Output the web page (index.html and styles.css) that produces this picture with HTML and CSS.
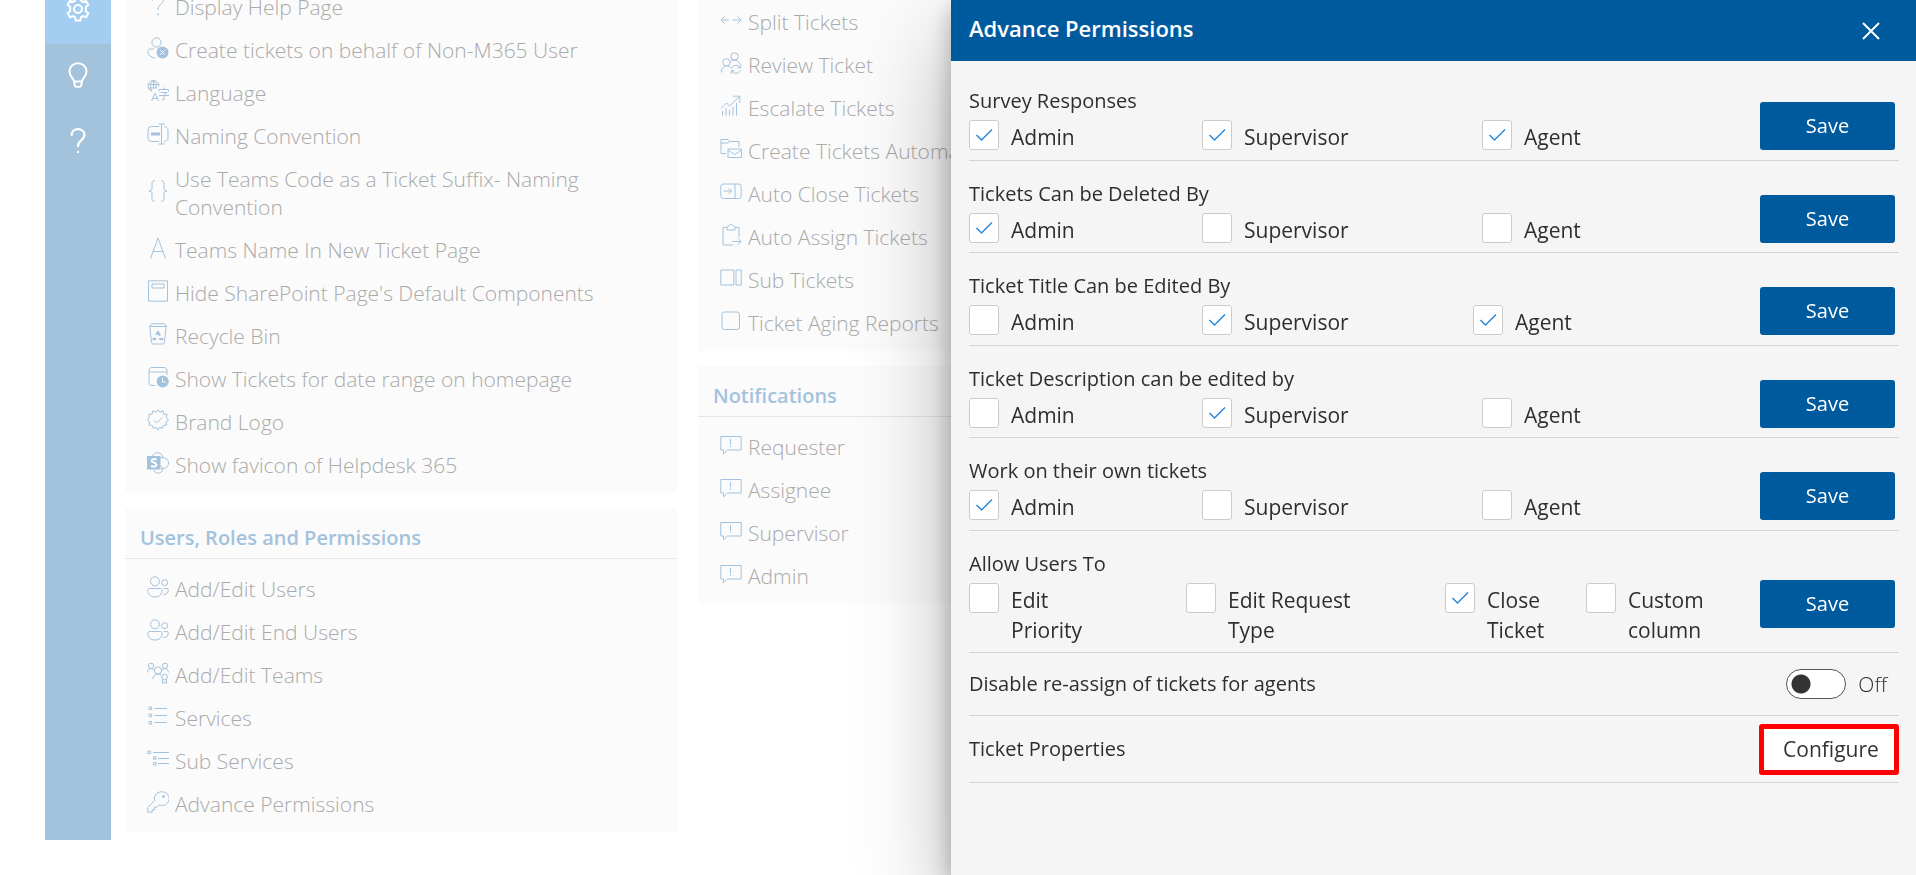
FILE: index.html
```html
<!DOCTYPE html>
<html lang="en">
<head>
<meta charset="utf-8">
<title>Helpdesk 365 Settings</title>
<link rel="stylesheet" href="styles.css">
</head>
<body>
<svg class="defs" aria-hidden="true">
  <symbol id="question" viewBox="0 0 22 22"><path d="M5.500 6.500C5.500 3 8 1 11 1s5.500 2 5.500 5c0 4-5.500 4.500-5.500 9v1"/><circle class="solid" cx="11" cy="20.300" r="1"/></symbol>
  <symbol id="user-x" viewBox="0 0 22 22"><circle cx="9.500" cy="5.500" r="4.600"/><path d="M7 12H3.500C1.800 12 .8 13 .8 14.500c0 3.700 3.200 6 7.700 6.500"/><circle class="solid" cx="15.500" cy="15.500" r="6"/><path class="knock" d="M13.300 13.300l4.400 4.400M17.700 13.300l-4.400 4.400"/></symbol>
  <symbol id="rename" viewBox="0 0 22 22"><path d="M12 3.500H4.500a3.500 3.500 0 0 0-3.500 3.500v8a3.500 3.500 0 0 0 3.500 3.500H12M17 3.500c2.500 0 4 1.500 4 3.500v8c0 2-1.500 3.500-4 3.500M14.500 1v20M11.500 1h6M11.500 21h6"/><path class="bold" d="M4 11h9"/></symbol>
  <symbol id="braces" viewBox="0 0 22 22"><path d="M8 .8C5.500.8 5 1.500 5 4v4c0 2-.8 3-3 3 2.200 0 3 1 3 3v4c0 2.500.5 3.200 3 3.200M14 .8c2.500 0 3 .7 3 3.200v4c0 2 .8 3 3 3-2.200 0-3 1-3 3v4c0 2.500-.5 3.200-3 3.200"/></symbol>
  <symbol id="font" viewBox="0 0 22 22"><path d="M3.500 21.500L11 1l7.500 20.500M6 14.500h10"/></symbol>
  <symbol id="page" viewBox="0 0 22 22"><path d="M1.500.8h19v20.400h-19zM5 4h12v4H5z"/></symbol>
  <symbol id="bin" viewBox="0 0 22 22"><path d="M2.500 3.500L4.500.8h13l2 2.700zM2.800 3.500L4.500 19c.2 1.300.8 2 2 2h9c1.200 0 1.800-.7 2-2l1.700-15.500"/><path class="dashed" d="M11 9.200l4.200 6.800H6.800z"/></symbol>
  <symbol id="calendar-clock" viewBox="0 0 22 22"><path d="M20 9V4.500C20 2.500 18.500 1.500 17 1.500H5C3 1.500 2 3 2 4.500v12C2 18.500 3 19.500 5 19.500h3M2 6h18"/><circle class="solid" cx="15.700" cy="15.500" r="6"/><path class="knock" d="M15.500 12v4h3"/></symbol>
  <symbol id="badge" viewBox="0 0 22 22"><path d="M11 .8l2 2.400 3-1.300.8 3.200 3.200.2-.5 3.200 2 2.500-2.700 1.900.8 3.100-3.200.4-1.100 3-2.900-1.200L11 21.200l-1.800-3-2.900 1.200-1.100-3-3.200-.4.800-3.100L.3 11l2-2.500L1.800 5.300 5 5.100l.8-3.200 3.200 1.300z"/><path d="M7 11.500l2.700 2.500 5.300-5.300"/></symbol>
  <symbol id="people" viewBox="0 0 22 22"><circle cx="8" cy="5.300" r="4.500"/><circle cx="17.700" cy="6.700" r="3"/><path d="M2.500 12.500h11c1 0 1.600.6 1.600 1.600 0 4-2.500 6.900-7.100 6.900S.8 18 .8 14.100c0-1 .7-1.600 1.700-1.600zM16.500 12.500H20c.8 0 1.300.5 1.300 1.300 0 3.200-1.800 4.800-5 4.800"/></symbol>
  <symbol id="teams" viewBox="0 0 22 22"><circle cx="4" cy="3.800" r="2.700"/><circle cx="18" cy="3.800" r="2.700"/><circle cx="11" cy="8.500" r="3.600"/><path d="M.5 10.500C.8 8 2 6.500 4 6.500c1.500 0 2.700.8 3.300 2M21.500 10.500C21.200 8 20 6.500 18 6.500c-1.500 0-2.700.8-3.300 2M5.800 17c.4-3 2.200-5 5.200-5 1.500 0 2.500.4 3.300 1.200"/><circle cx="17.500" cy="15" r="2.800"/><path d="M15.500 17.500v4l2-1.500 2 1.500v-4"/></symbol>
  <symbol id="list" viewBox="0 0 22 22"><path d="M2 2h2.500v2.500H2zM2 9.200h2.500v2.500H2zM2 16.500h2.500V19H2zM7.500 3.500H20M7.500 10.500H20M7.500 17.500H20"/></symbol>
  <symbol id="sublist" viewBox="0 0 22 22"><path d="M.8 3h2.700v2.500H.8zM6.500 8.800H9v2.500H6.500zM6.500 14.500H9V17H6.500zM6 4.500h16M11 10.500h11M11 15.500h11"/></symbol>
  <symbol id="key" viewBox="0 0 22 22"><path d="M14.300.8a6.900 6.900 0 0 0-6.700 8.800L.8 16.400v4.800h4.400v-2.400h2.400v-2.600H10l2.200-2.400a6.900 6.900 0 1 0 2.100-13z"/><circle class="solid" cx="16.500" cy="5.500" r="1.400"/></symbol>
  <symbol id="split" viewBox="0 0 22 22"><path d="M1 11h8M4.500 7.500L1 11l3.500 3.500M12.500 11H21M17.500 7.500L21 11l-3.500 3.500"/></symbol>
  <symbol id="review" viewBox="0 0 22 22"><circle cx="14.500" cy="4.500" r="3.700"/><circle cx="6.500" cy="10.300" r="3.700"/><path d="M1 20.500C1.500 16.500 3.500 14 6.500 14c1.700 0 3 .7 4 2M10.500 9.800c1-1 2.300-1.600 4-1.600 2.700 0 4.800 1.500 5.800 4.300M11.500 17c.5-2.500 2.200-3.700 4.500-3.700 1.800 0 3 .8 4 2.200M20.800 12.500v3.200h-3.200M20.500 18c-.5 2-2.200 3.300-4.500 3.300-1.800 0-3-.8-4-2.200M11.300 22v-3.200h3.200"/></symbol>
  <symbol id="escalate" viewBox="0 0 22 22"><path d="M1 13.500L6.500 8l3 3L19.500 1.500M13 1.200h6.800V8M2.500 16v4.500M6 13v7.500M9.500 15v5.500M13 12v8.500M16.500 8v12.500"/></symbol>
  <symbol id="folder-mail" viewBox="0 0 22 22"><path d="M6 15.500H1V1.500h7l1.500 2h9.500V9M1 5h7l1.500-1.500M8 11h13.500v8.500H8zM8 12l6.700 4.500L21.500 12"/></symbol>
  <symbol id="panel-close" viewBox="0 0 22 22"><rect x=".8" y="3" width="20.400" height="14.500" rx="2.500"/><path d="M15 3v14.500M3.500 10h8M8.500 7l3 3-3 3"/></symbol>
  <symbol id="clipboard" viewBox="0 0 22 22"><path d="M13 21H3V3.500h4c0-1.500.8-1.500 1.800-1.500.2-.8 1-1.500 2.200-1.500S13 1.200 13.200 2c1 0 1.800 0 1.800 1.500h4V13M7 3.500V6h8V3.500M12 17.500h9M17.500 14l3.500 3.500-3.500 3.500"/></symbol>
  <symbol id="columns" viewBox="0 0 22 22"><path d="M.8 3h13v15H.8zM16 3h5.200v15H16z"/></symbol>
  <symbol id="square" viewBox="0 0 22 22"><rect x="2" y="2" width="17.500" height="17.500" rx="2.500"/></symbol>
  <symbol id="feedback" viewBox="0 0 22 22"><path d="M.8 2.500h20.400v13.500H7.500L3.500 19.800V16H.8zM10.500 5v5.500M10.500 11.500V13"/></symbol>
  <symbol id="gear" viewBox="0 0 26 26"><path d="M10.700 1.500h4.600l.6 3.200 2 1.200 3.100-1.100 2.300 4-2.500 2.100v4.200l2.500 2.100-2.300 4-3.100-1.100-2 1.200-.6 3.200h-4.600l-.6-3.200-2-1.200L5 21.200l-2.300-4 2.500-2.100v-4.200L2.700 8.800l2.300-4 3.100 1.100 2-1.200z"/><circle cx="13" cy="13" r="4"/></symbol>
  <symbol id="bulb" viewBox="0 0 26 26"><path d="M9 19.500c-.3-3-4.500-5-4.500-10A8.300 8.300 0 0 1 13 1.200a8.300 8.300 0 0 1 8.500 8.300c0 5-4.200 7-4.500 10zM9 19.500l.8 4c.1.800.7 1.300 1.500 1.300h3.400c.8 0 1.400-.5 1.500-1.300l.8-4"/></symbol>
</svg>

<div class="workspace">
  <nav class="rail" aria-label="Main">
    <a class="rail-item active" href="#settings" aria-label="Settings"><svg><use href="#gear"/></svg></a>
    <a class="rail-item" href="#ideas" aria-label="Ideas"><svg><use href="#bulb"/></svg></a>
    <a class="rail-item" href="#help" aria-label="Help"><svg><use href="#question"/></svg></a>
  </nav>
  <main class="columns">
    <div class="column">
      <section class="card continued">
        <ul class="links">
          <li><a href="#"><svg><use href="#question"/></svg>Display Help Page</a></li>
          <li><a href="#"><svg><use href="#user-x"/></svg>Create tickets on behalf of Non-M365 User</a></li>
          <li><a href="#"><svg viewBox="0 0 22 22" aria-hidden="true"><path d="M4.500 11A5.500 5.500 0 1 1 12 6.500M.8 4.500h11M.8 8h9M6.500.5C3 3 3 8 5 11M6.500.5v7.500M6.500.5C9 2.500 9.500 5 9 8M12 11.500V9.500h9.500v2M16.800 7.500v2M13.500 12.500h6.500l-3 2.500v4.500h-2M12 15.500h10M4.500 21L8 13l3.500 8M5.500 18.500h5"/></svg>Language</a></li>
          <li><a href="#"><svg><use href="#rename"/></svg>Naming Convention</a></li>
          <li><a href="#"><svg><use href="#braces"/></svg>Use Teams Code as a Ticket Suffix- Naming Convention</a></li>
          <li><a href="#"><svg><use href="#font"/></svg>Teams Name In New Ticket Page</a></li>
          <li><a href="#"><svg><use href="#page"/></svg>Hide SharePoint Page's Default Components</a></li>
          <li><a href="#"><svg><use href="#bin"/></svg>Recycle Bin</a></li>
          <li><a href="#"><svg><use href="#calendar-clock"/></svg>Show Tickets for date range on homepage</a></li>
          <li><a href="#"><svg><use href="#badge"/></svg>Brand Logo</a></li>
          <li><a href="#"><svg viewBox="0 0 22 22" aria-hidden="true"><path d="M5.500 4C6.500 2 8 .8 10.500.8c3 0 5.500 2.200 5.500 5.200M13 6c5-1.500 8.500 1.500 8.500 5s-3 6-7 5.500M7 17.500c0 2 1.500 3.700 4 3.700s4.500-1.700 4.500-4-1.500-3.700-3-4"/><path class="solid" d="M0 4h13.500v13.500H0z"/><path class="knock heavy" d="M9.500 7.800C7.500 6.500 4.500 7 4.500 8.800c0 2.200 5 1.500 5 4 0 2-3.300 2.300-5.300 1"/></svg>Show favicon of Helpdesk 365</a></li>
        </ul>
      </section>
      <section class="card">
        <h2>Users, Roles and Permissions</h2>
        <ul class="links">
          <li><a href="#"><svg><use href="#people"/></svg>Add/Edit Users</a></li>
          <li><a href="#"><svg><use href="#people"/></svg>Add/Edit End Users</a></li>
          <li><a href="#"><svg><use href="#teams"/></svg>Add/Edit Teams</a></li>
          <li><a href="#"><svg><use href="#list"/></svg>Services</a></li>
          <li><a href="#"><svg><use href="#sublist"/></svg>Sub Services</a></li>
          <li><a href="#"><svg><use href="#key"/></svg>Advance Permissions</a></li>
        </ul>
      </section>
    </div>
    <div class="column">
      <section class="card">
        <ul class="links">
          <li><a href="#"><svg><use href="#split"/></svg>Split Tickets</a></li>
          <li><a href="#"><svg><use href="#review"/></svg>Review Ticket</a></li>
          <li><a href="#"><svg><use href="#escalate"/></svg>Escalate Tickets</a></li>
          <li><a href="#"><svg><use href="#folder-mail"/></svg>Create Tickets Automatically</a></li>
          <li><a href="#"><svg><use href="#panel-close"/></svg>Auto Close Tickets</a></li>
          <li><a href="#"><svg><use href="#clipboard"/></svg>Auto Assign Tickets</a></li>
          <li><a href="#"><svg><use href="#columns"/></svg>Sub Tickets</a></li>
          <li><a href="#"><svg><use href="#square"/></svg>Ticket Aging Reports</a></li>
        </ul>
      </section>
      <section class="card">
        <h2>Notifications</h2>
        <ul class="links">
          <li><a href="#"><svg><use href="#feedback"/></svg>Requester</a></li>
          <li><a href="#"><svg><use href="#feedback"/></svg>Assignee</a></li>
          <li><a href="#"><svg><use href="#feedback"/></svg>Supervisor</a></li>
          <li><a href="#"><svg><use href="#feedback"/></svg>Admin</a></li>
        </ul>
      </section>
    </div>
  </main>
</div>

<aside class="panel" aria-label="Advance Permissions">
  <header class="panel-head">
    <h1>Advance Permissions</h1>
    <button class="close" type="button" aria-label="Close"><svg viewBox="0 0 18 18"><path d="M1 1l16 16M17 1L1 17"/></svg></button>
  </header>
  <div class="panel-body">
    <section class="row">
      <div class="group">
        <h3>Survey Responses</h3>
        <div class="options roles">
          <label><input type="checkbox" checked><span>Admin</span></label>
          <label><input type="checkbox" checked><span>Supervisor</span></label>
          <label><input type="checkbox" checked><span>Agent</span></label>
        </div>
      </div>
      <button class="save" type="button">Save</button>
    </section>
    <section class="row">
      <div class="group">
        <h3>Tickets Can be Deleted By</h3>
        <div class="options roles">
          <label><input type="checkbox" checked><span>Admin</span></label>
          <label><input type="checkbox"><span>Supervisor</span></label>
          <label><input type="checkbox"><span>Agent</span></label>
        </div>
      </div>
      <button class="save" type="button">Save</button>
    </section>
    <section class="row">
      <div class="group">
        <h3>Ticket Title Can be Edited By</h3>
        <div class="options title-roles">
          <label><input type="checkbox"><span>Admin</span></label>
          <label><input type="checkbox" checked><span>Supervisor</span></label>
          <label><input type="checkbox" checked><span>Agent</span></label>
        </div>
      </div>
      <button class="save" type="button">Save</button>
    </section>
    <section class="row">
      <div class="group">
        <h3>Ticket Description can be edited by</h3>
        <div class="options roles">
          <label><input type="checkbox"><span>Admin</span></label>
          <label><input type="checkbox" checked><span>Supervisor</span></label>
          <label><input type="checkbox"><span>Agent</span></label>
        </div>
      </div>
      <button class="save" type="button">Save</button>
    </section>
    <section class="row">
      <div class="group">
        <h3>Work on their own tickets</h3>
        <div class="options roles">
          <label><input type="checkbox" checked><span>Admin</span></label>
          <label><input type="checkbox"><span>Supervisor</span></label>
          <label><input type="checkbox"><span>Agent</span></label>
        </div>
      </div>
      <button class="save" type="button">Save</button>
    </section>
    <section class="row">
      <div class="group">
        <h3>Allow Users To</h3>
        <div class="options actions">
          <label><input type="checkbox"><span>Edit<br>Priority</span></label>
          <label><input type="checkbox"><span>Edit Request<br>Type</span></label>
          <label><input type="checkbox" checked><span>Close<br>Ticket</span></label>
          <label><input type="checkbox"><span>Custom<br>column</span></label>
        </div>
      </div>
      <button class="save" type="button">Save</button>
    </section>
    <section class="line">
      <label for="reassign">Disable re-assign of tickets for agents</label>
      <div class="toggle"><input id="reassign" type="checkbox" role="switch"><span>Off</span></div>
    </section>
    <section class="line properties">
      <h3>Ticket Properties</h3>
      <button class="configure" type="button">Configure</button>
    </section>
  </div>
</aside>
</body>
</html>
```

FILE: styles.css
```css
* { box-sizing: border-box; }
body {
  margin: 0;
  height: 100vh;
  overflow: hidden;
  background: #fff;
  color: #2e2e2e;
  font: 400 20px/30px "Open Sans", "Noto Sans", sans-serif;
}
h1, h2, h3, ul { margin: 0; padding: 0; font: inherit; list-style: none; }
a { color: inherit; text-decoration: none; }
button, input { font: inherit; margin: 0; }
svg { display: block; flex: none; fill: none; stroke: currentColor; }
.defs { position: absolute; width: 0; height: 0; }
.solid { fill: currentColor; stroke: none; }
.knock { stroke: #fff; }
.heavy { stroke-width: 2; }
.bold { stroke-width: 3; }
.dashed { stroke-width: 2; stroke-dasharray: 4 3; }

.workspace { display: flex; align-items: stretch; gap: 14px; padding: 0 93px 0 45px; margin-top: -7px; }
.rail { width: 66px; margin: -15px 0 -8px; background: #a3c2dc; color: #fff; flex: none; }
.rail-item { display: flex; align-items: center; justify-content: center; height: 66px; padding-bottom: 4px; }
.rail-item.active { background: #a3cef1; border-radius: 0 0 3px 3px; }
.rail-item svg { width: 26px; height: 26px; stroke-width: 2; }

.columns { flex: 1; display: grid; grid-template-columns: repeat(3, minmax(0, 1fr)); gap: 21px; align-items: start; }
.column { display: grid; gap: 15px; }
.card { background: #fbfbfb; color: #aaa; font-size: 21px; font-weight: 300; }
.card h2 { padding: 15px 15px 5px; border-bottom: 1px solid #e6e6e6; color: #a3c2dd; font-size: 20px; font-weight: 600; }
.links { display: grid; gap: 15px; padding: 15px 22px 14px; line-height: 28px; }
h2 + .links { padding-top: 16px; }
.continued .links { padding-top: 0; }
.links a { display: flex; align-items: center; gap: 6px; }
.links svg { width: 22px; height: 22px; margin-bottom: 4px; color: #a3c2dd; stroke-width: 1; }

.panel {
  position: fixed;
  top: 0;
  right: 0;
  bottom: 0;
  width: calc(50vw + 7px);
  background: #f5f5f5;
  box-shadow: 0 38px 86px rgba(0, 0, 0, .3), 0 7px 22px rgba(0, 0, 0, .26);
}
.panel-head { display: flex; align-items: center; justify-content: space-between; height: 61px; padding: 0 36px 0 18px; background: #005a9e; color: #fff; }
.panel-head h1 { font-size: 22px; font-weight: 600; padding-bottom: 6px; }
.close { padding: 0; border: 0; background: none; color: #fff; }
.close svg { width: 18px; height: 18px; stroke-width: 2; }
.panel-body { padding: 7px 17px 0 18px; }
.row { display: flex; align-items: center; padding: 18px 4px 8px 0; border-bottom: 1px solid #d8d2d4; }
.row:nth-child(even) { padding-bottom: 7px; }
.group { flex: 1; }
.group h3 { padding-bottom: 4px; }
.options { display: grid; font-size: 21px; }
.options.roles { grid-template-columns: 233fr 280fr 278fr; }
.options.title-roles { grid-template-columns: 233fr 271fr 287fr; }
.options.actions { grid-template-columns: 217fr 259fr 141fr 174fr; }
.options label { display: flex; align-items: flex-start; gap: 12px; }
.options span { padding-top: 2px; }
.options input {
  appearance: none;
  flex: none;
  width: 30px;
  height: 30px;
  border: 1px solid #cdcbc9;
  border-radius: 3px;
  background: #fff;
}
.options input:checked {
  background: #fff url("data:image/svg+xml,%3Csvg xmlns='http://www.w3.org/2000/svg' viewBox='0 0 28 28'%3E%3Cpath d='M6.500 14l5 5L22 8.500' fill='none' stroke='%232b88d8' stroke-width='1.500'/%3E%3C/svg%3E") center / 28px no-repeat;
}
.save { width: 135px; height: 48px; margin-top: 14px; border: 0; border-radius: 3px; background: #005a9e; color: #fff; }
.line { display: flex; align-items: center; justify-content: space-between; height: 63px; border-bottom: 1px solid #d8d2d4; }
.properties { height: 67px; }
.toggle { display: flex; align-items: center; gap: 12px; padding-right: 12px; font-size: 21px; font-weight: 300; }
.toggle input {
  appearance: none;
  width: 60px;
  height: 30px;
  border: 1px solid #555;
  border-radius: 15px;
  background: radial-gradient(circle at 14px 14px, #333 9px, transparent 10px) #fff;
}
.configure { width: 140px; height: 51px; padding: 0 0 0 4px; border: 5px solid #f00; border-radius: 3px; background: #fff; color: #333; font-size: 21px; }
```
